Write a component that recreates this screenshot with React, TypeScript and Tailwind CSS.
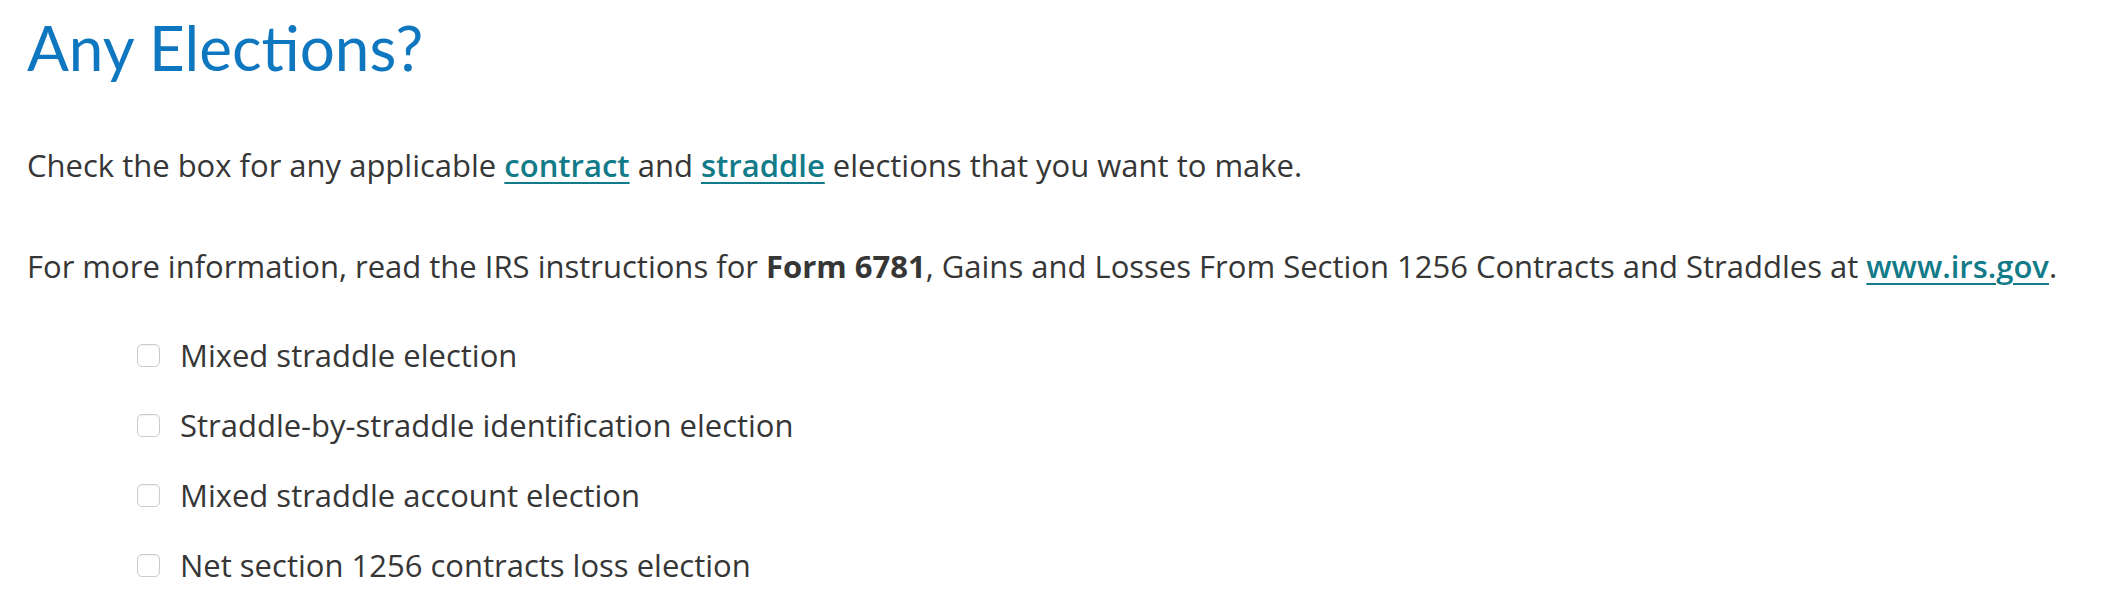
import React from 'react'

const options = [
  'Mixed straddle election',
  'Straddle-by-straddle identification election',
  'Mixed straddle account election',
  'Net section 1256 contracts loss election',
]

function Link({ children }: { children: React.ReactNode }) {
  return (
    <a href="#" className="font-semibold text-[#127b89] underline decoration-2 underline-offset-[5px]">
      {children}
    </a>
  )
}

export default function App() {
  return (
    <div
      className="w-[2124px] h-[598px] bg-white pl-[27px] pt-[10px] text-[#363636] overflow-hidden"
      style={{ fontFamily: '"Open Sans", "Noto Sans", sans-serif' }}
    >
      <h1
        className="text-[62px] leading-[74px] font-normal text-[#0f77c0]"
        style={{ fontFamily: 'Lato, "Open Sans", sans-serif' }}
      >
        Any Elections?
      </h1>

      <p className="mt-[61px] text-[31px] leading-[40px]">
        Check the box for any applicable <Link>contract</Link> and <Link>straddle</Link> elections that you want to make.
      </p>

      <p className="mt-[61px] text-[31px] leading-[40px]">
        For more information, read the IRS instructions for <b className="font-bold">Form 6781</b>, Gains and Losses From
        Section 1256 Contracts and Straddles at <Link>www.irs.gov</Link>.
      </p>

      <ul className="mt-[49px] pl-[110px] flex flex-col gap-[30px]">
        {options.map((label) => (
          <li key={label} className="flex items-center gap-[20px]">
            <span className="w-[23px] h-[23px] rounded-[5px] border border-[#cccccc] bg-white shadow-[inset_0_1px_2px_rgba(0,0,0,0.06)]" />
            <span className="text-[31px] leading-[40px]">{label}</span>
          </li>
        ))}
      </ul>
    </div>
  )
}
